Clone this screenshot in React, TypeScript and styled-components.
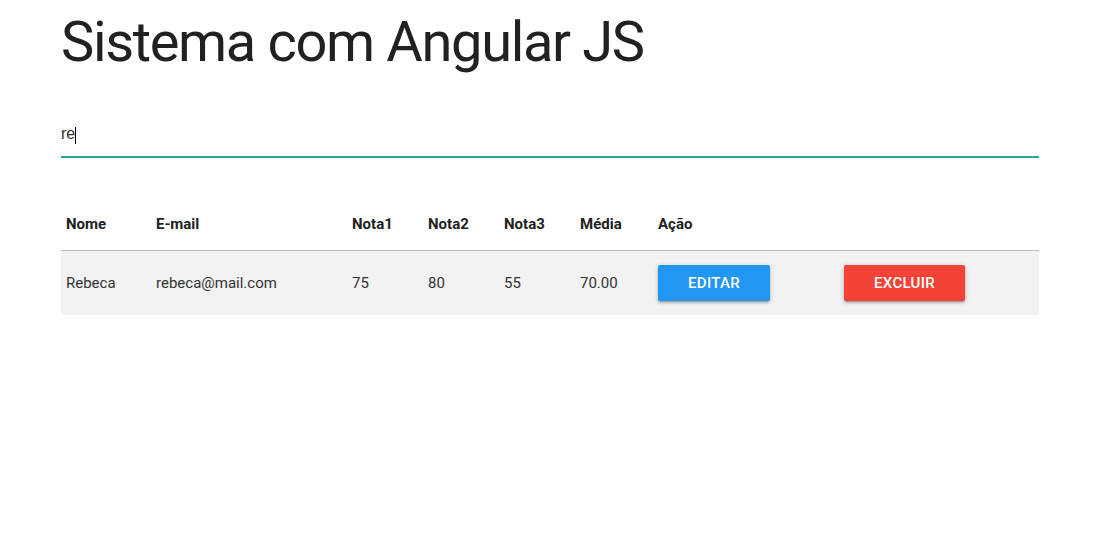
import React from "react";
import styled, { createGlobalStyle } from "styled-components";

const Global = createGlobalStyle`
  html, body { margin: 0; padding: 0; background: #fff; }
  body { font-family: Roboto, "Noto Sans", sans-serif; color: rgba(0,0,0,0.87); }
  * { box-sizing: border-box; }
`;

const Container = styled.div`
  margin: 0 58px 0 61px;
  display: flex;
  flex-direction: column;
`;

const Title = styled.h1`
  margin: 12px 0 0 0;
  font-size: 56px;
  font-weight: 400;
  line-height: 1.1;
  color: #212121;
  letter-spacing: -1.35px;
`;

const SearchField = styled.div`
  position: relative;
  margin-top: 35px;
`;

const SearchInput = styled.input`
  display: block;
  height: 48px;
  width: 100%;
  padding: 4px 0 0 0;
  border: none;
  border-bottom: 1px solid #26a69a;
  box-shadow: 0 1px 0 0 #26a69a;
  outline: none;
  font-family: "Liberation Sans", Arial, sans-serif;
  font-size: 16px;
  color: #333;
  background: transparent;
  caret-color: transparent;
`;

const Caret = styled.span`
  position: absolute;
  left: 14px;
  top: 18px;
  width: 1px;
  height: 17px;
  background: #000;
`;

const Table = styled.table`
  margin-top: 41px;
  width: 100%;
  border-collapse: collapse;
  table-layout: fixed;
`;

const HeadRow = styled.tr`
  border-bottom: 1px solid rgba(0,0,0,0.12);
`;

const BodyRow = styled.tr`
  background: #f2f2f2;
`;

const Th = styled.th`
  padding: 15px 5px;
  text-align: left;
  font-size: 15px;
  font-weight: 700;
  line-height: 22px;
  color: #212121;
`;

const Td = styled.td`
  padding: 14px 5px;
  font-size: 15px;
  line-height: 22px;
  color: #333;
  vertical-align: middle;
`;

const Button = styled.button<{ $color: string; $w: number }>`
  height: 36px;
  width: ${(p) => p.$w}px;
  border: none;
  border-radius: 2px;
  background: ${(p) => p.$color};
  color: #fff;
  font-family: Roboto, sans-serif;
  font-size: 15px;
  font-weight: 500;
  letter-spacing: 0.3px;
  text-transform: uppercase;
  box-shadow: 0 2px 2px 0 rgba(0,0,0,0.14), 0 3px 1px -2px rgba(0,0,0,0.12), 0 1px 5px 0 rgba(0,0,0,0.2);
  cursor: pointer;
  display: block;
`;

const cols = [90, 196, 76, 76, 76, 78, 186, 200];

export default function App() {
  return (
    <>
      <Global />
      <Container>
        <Title>Sistema com Angular JS</Title>
        <SearchField>
          <SearchInput defaultValue="re" />
          <Caret />
        </SearchField>
        <Table>
          <colgroup>
            {cols.map((w, i) => (
              <col key={i} style={{ width: w }} />
            ))}
          </colgroup>
          <thead>
            <HeadRow>
              <Th>Nome</Th>
              <Th>E-mail</Th>
              <Th>Nota1</Th>
              <Th>Nota2</Th>
              <Th>Nota3</Th>
              <Th>Média</Th>
              <Th>Ação</Th>
              <Th></Th>
            </HeadRow>
          </thead>
          <tbody>
            <BodyRow>
              <Td>Rebeca</Td>
              <Td>rebeca@mail.com</Td>
              <Td>75</Td>
              <Td>80</Td>
              <Td>55</Td>
              <Td>70.00</Td>
              <Td>
                <Button $color="#2196f3" $w={112}>Editar</Button>
              </Td>
              <Td>
                <Button $color="#f44336" $w={121}>Excluir</Button>
              </Td>
            </BodyRow>
          </tbody>
        </Table>
      </Container>
    </>
  );
}
